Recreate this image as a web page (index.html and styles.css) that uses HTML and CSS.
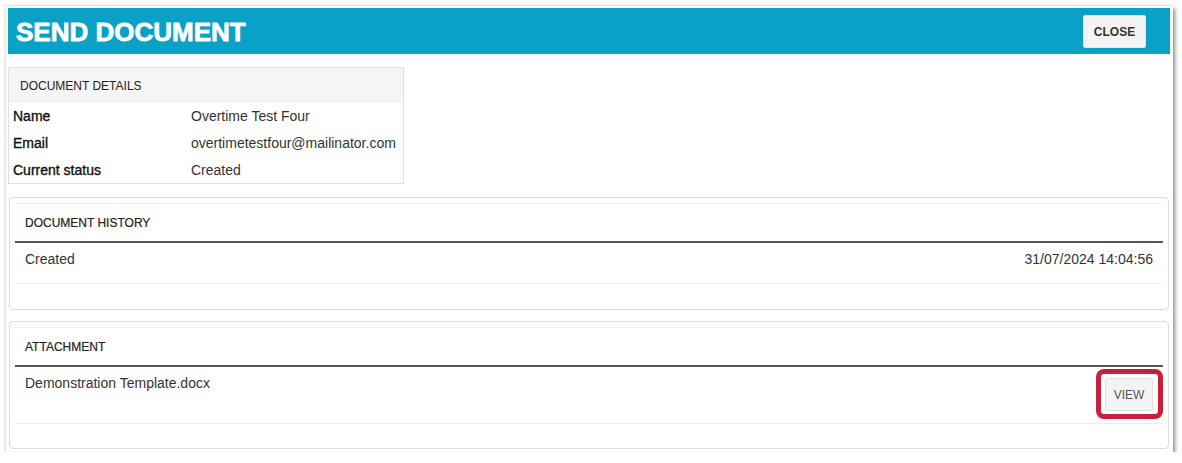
FILE: index.html
```html
<!DOCTYPE html>
<html lang="en">
<head>
    <meta charset="UTF-8">
    <meta name="viewport" content="width=device-width, initial-scale=1.0">
    <title>Send Document</title>
    <link rel="stylesheet" href="styles.css">
</head>
<body>

    <div class="modal">
        <div class="modal-header">
            <h1>SEND DOCUMENT</h1>
            <button type="button" class="btn-close">CLOSE</button>
        </div>

        <div class="modal-body">
            <!-- Document details -->
            <table class="details">
                <thead>
                    <tr><th colspan="2">DOCUMENT DETAILS</th></tr>
                </thead>
                <tbody>
                    <tr><td class="label">Name</td><td>Overtime Test Four</td></tr>
                    <tr><td class="label">Email</td><td>overtimetestfour@mailinator.com</td></tr>
                    <tr><td class="label">Current status</td><td>Created</td></tr>
                </tbody>
            </table>

            <!-- History -->
            <div class="panel">
                <table class="list">
                    <thead>
                        <tr><th colspan="2">DOCUMENT HISTORY</th></tr>
                    </thead>
                    <tbody>
                        <tr class="history-row">
                            <td>Created</td>
                            <td class="right">31/07/2024 14:04:56</td>
                        </tr>
                    </tbody>
                </table>
            </div>

            <!-- Attachment -->
            <div class="panel">
                <table class="list">
                    <thead>
                        <tr><th colspan="2">ATTACHMENT</th></tr>
                    </thead>
                    <tbody>
                        <tr class="attach-row">
                            <td>Demonstration Template.docx</td>
                            <td class="right action"><span class="highlight"><button type="button" class="btn-view">VIEW</button></span></td>
                        </tr>
                    </tbody>
                </table>
            </div>
        </div>
    </div>

</body>
</html>
```

FILE: styles.css
```css
body {
    font-family: "Liberation Sans", Arial, sans-serif;
    font-size: 14px;
    color: #333;
    margin: 0;
    background-color: #fff;
}
.modal {
    margin: 5px 0 0 5px;
    width: 1168px;
    box-sizing: border-box;
    padding: 3px;
    background-color: #fff;
    border: 1px solid #e4e4e4;
    border-width: 1px 0 0 1px;
    box-shadow: 2px 3px 4px rgba(0, 0, 0, 0.45);
}
.modal-header {
    display: flex;
    justify-content: space-between;
    align-items: flex-start;
    margin: -1px 0 0 -1px;
    height: 46px;
    background-color: #0aa1c7;
}
.modal-header h1 {
    margin: 0;
    padding: 2px 0 0 8px;
    font-size: 26px;
    line-height: 44px;
    font-weight: bold;
    color: #fff;
    -webkit-text-stroke: 0.8px #fff;
}
.btn-close {
    margin: 7px 24px 0 0;
    height: 33px;
    width: 63px;
    padding: 0;
    font-family: inherit;
    font-size: 12px;
    font-weight: bold;
    color: #333;
    background-color: #f4f4f5;
    border: 1px solid #e6e6e6;
    border-radius: 2px;
}
.modal-body {
    padding-top: 13px;
}
.details {
    width: 396px;
    margin-left: -1px;
    border-collapse: collapse;
    border: 1px solid #e0e0e0;
}
.details th {
    height: 35px;
    padding: 0 0 0 11px;
    text-align: left;
    font-size: 12px;
    font-weight: normal;
    color: #222;
    background-color: #f5f5f5;
}
.details td {
    height: 26.7px;
    padding: 0 0 0 4px;
    line-height: 20px;
    color: #333;
}
.details td.label {
    width: 174px;
    color: #111;
    -webkit-text-stroke: 0.35px #111;
}
.panel {
    margin: 13px 1px 0 0;
    padding: 5px 5px 25px 5px;
    border: 1px solid #ddd;
    border-radius: 4px;
}
.panel + .panel {
    margin-top: 11px;
    padding-bottom: 24px;
}
.list {
    width: 100%;
    border-collapse: collapse;
}
.list th {
    height: 37px;
    padding: 0 10px;
    text-align: left;
    font-size: 12px;
    font-weight: normal;
    color: #222;
    -webkit-text-stroke: 0.2px #222;
    border-top: 1px solid #eee;
    border-bottom: 2px solid #555;
}
.list td {
    vertical-align: top;
    line-height: 20px;
    border-bottom: 1px solid #eee;
}
.history-row td {
    padding: 6px 10px 14px 10px;
}
.attach-row td {
    padding: 6px 10px 30px 10px;
}
.attach-row td.action {
    padding: 11px 10px 12px 10px;
}
.right {
    text-align: right;
}
.highlight {
    position: relative;
    display: inline-block;
}
.highlight::after {
    content: "";
    position: absolute;
    top: -9px;
    left: -9px;
    right: -10px;
    bottom: -8px;
    border: 5px solid #c8203a;
    border-radius: 8px;
}
.btn-view {
    display: block;
    height: 33px;
    width: 48px;
    padding: 0;
    font-family: inherit;
    font-size: 12px;
    color: #555;
    background-color: #f4f4f4;
    border: 1px solid #e0e0e0;
    border-radius: 2px;
}
```
